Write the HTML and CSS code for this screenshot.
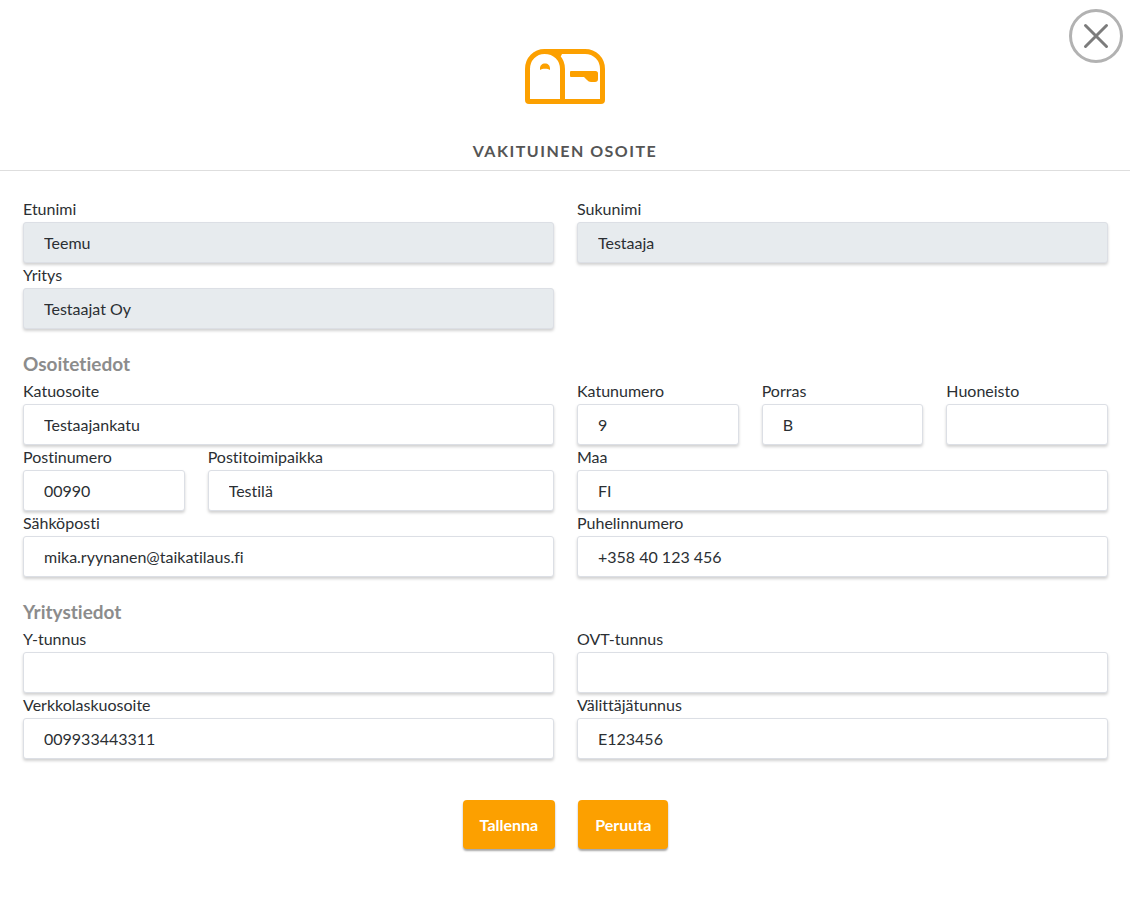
FILE: index.html
```html
<!DOCTYPE html>
<html lang="fi">
<head>
<meta charset="utf-8">
<meta name="viewport" content="width=device-width, initial-scale=1">
<title>Vakituinen osoite</title>
<link rel="stylesheet" href="styles.css">
</head>
<body>
<header class="dialog-header">
  <svg class="mailbox" viewBox="0 0 80 56" fill="none" stroke="#fca000" stroke-width="5" stroke-linejoin="round" aria-hidden="true">
    <path d="M2.500 51V20C2.500 10 10 2.500 19.500 2.500H60C70 2.500 77.500 10 77.500 20V51Q77.500 52.500 76 52.500H4Q2.500 52.500 2.500 51Z"/>
    <path d="M19.500 2.500C30 2.500 37.500 10 37.500 20V52.500"/>
    <path d="M19.500 2.500H28L36 7" stroke-width="4"/>
    <path d="M15 21V19.500C15 16.500 17 14.500 20 14.500C23 14.500 25 16.500 25 19.500V21C23 19.300 17 19.300 15 21Z" fill="#fca000" stroke="none"/>
    <path d="M46 22H70.500Q73 22 73 24.500V30Q73 33 70 33H66Q63.500 33 62 31L59 28H46Q45 28 45 27V23Q45 22 46 22Z" fill="#fca000" stroke="none"/>
  </svg>
  <h1 class="dialog-title">VAKITUINEN OSOITE</h1>
  <button class="close" type="button" aria-label="Sulje">
    <svg class="close-icon" viewBox="0 0 54 54" fill="none" aria-hidden="true">
      <circle cx="27" cy="27" r="25.500" stroke="#b2b2b2" stroke-width="3"/>
      <path d="M16.500 16.500L37.500 37.500M37.500 16.500L16.500 37.500" stroke="#7c7c7c" stroke-width="3" stroke-linecap="round"/>
    </svg>
  </button>
</header>
<form class="address-form">
  <section class="fields">
    <div class="field half"><label for="etunimi">Etunimi</label><input id="etunimi" type="text" value="Teemu" readonly></div>
    <div class="field half"><label for="sukunimi">Sukunimi</label><input id="sukunimi" type="text" value="Testaaja" readonly></div>
    <div class="field half"><label for="yritys">Yritys</label><input id="yritys" type="text" value="Testaajat Oy" readonly></div>
  </section>
  <h2 class="section-title">Osoitetiedot</h2>
  <section class="fields">
    <div class="field half"><label for="katuosoite">Katuosoite</label><input id="katuosoite" type="text" value="Testaajankatu"></div>
    <div class="field"><label for="katunumero">Katunumero</label><input id="katunumero" type="text" value="9"></div>
    <div class="field"><label for="porras">Porras</label><input id="porras" type="text" value="B"></div>
    <div class="field"><label for="huoneisto">Huoneisto</label><input id="huoneisto" type="text"></div>
    <div class="field"><label for="postinumero">Postinumero</label><input id="postinumero" type="text" value="00990"></div>
    <div class="field third"><label for="postitoimipaikka">Postitoimipaikka</label><input id="postitoimipaikka" type="text" value="Testilä"></div>
    <div class="field half"><label for="maa">Maa</label><input id="maa" type="text" value="FI"></div>
    <div class="field half"><label for="sahkoposti">Sähköposti</label><input id="sahkoposti" type="email" value="mika.ryynanen@taikatilaus.fi"></div>
    <div class="field half"><label for="puhelin">Puhelinnumero</label><input id="puhelin" type="tel" value="+358 40 123 456"></div>
  </section>
  <h2 class="section-title">Yritystiedot</h2>
  <section class="fields">
    <div class="field half"><label for="ytunnus">Y-tunnus</label><input id="ytunnus" type="text"></div>
    <div class="field half"><label for="ovt">OVT-tunnus</label><input id="ovt" type="text"></div>
    <div class="field half"><label for="verkkolasku">Verkkolaskuosoite</label><input id="verkkolasku" type="text" value="009933443311"></div>
    <div class="field half"><label for="valittaja">Välittäjätunnus</label><input id="valittaja" type="text" value="E123456"></div>
  </section>
  <div class="actions">
    <button class="btn" type="submit">Tallenna</button>
    <button class="btn" type="button">Peruuta</button>
  </div>
</form>
</body>
</html>
```

FILE: styles.css
```css
* {
  box-sizing: border-box;
}

body {
  margin: 0;
  background: #fff;
  color: #2b2f33;
  font-family: Lato, sans-serif;
  font-size: 16px;
  font-variant-ligatures: none;
}

.dialog-header {
  position: relative;
  display: flex;
  flex-direction: column;
  align-items: center;
  padding: 49px 0 7px;
  border-bottom: 1px solid #dedede;
}

.mailbox {
  width: 80px;
  height: 56px;
}

.dialog-title {
  margin: 34px 0 0;
  color: #555;
  font-size: 16px;
  font-weight: 700;
  line-height: 24px;
  letter-spacing: 1.5px;
}

.close {
  position: absolute;
  top: 9px;
  right: 7px;
  padding: 0;
  border: 0;
  background: none;
  cursor: pointer;
}

.close-icon {
  display: block;
  width: 54px;
  height: 54px;
}

.address-form {
  padding: 26px 22px 48px 23px;
}

.fields {
  display: grid;
  grid-template-columns: repeat(6, minmax(0, 1fr));
  column-gap: 23px;
}

.field {
  display: flex;
  flex-direction: column;
  gap: 2px;
}

.third {
  grid-column: span 2;
}

.half {
  grid-column: span 3;
}

.field label {
  line-height: 23px;
}

.field input {
  width: 100%;
  height: 41px;
  padding: 0 20px;
  border: 1px solid #dcdfe5;
  border-radius: 3px;
  background: #fff;
  box-shadow: 0 2px 3px rgba(0, 0, 0, 0.18);
  color: #2b2f33;
  font: inherit;
  font-variant-ligatures: none;
}

.field input:read-only {
  background: #e7ebee;
}

.section-title {
  margin: 22px 0 2px;
  color: #8c8c8c;
  font-size: 19px;
  font-weight: 700;
  line-height: 26px;
}

.actions {
  display: flex;
  justify-content: center;
  gap: 23px;
  margin-top: 41px;
}

.btn {
  height: 49px;
  padding: 0 17px;
  border: 0;
  border-radius: 4px;
  background: #fca000;
  box-shadow: 0 2px 2px rgba(0, 0, 0, 0.35);
  color: #fff;
  font: 700 16px Lato, sans-serif;
  cursor: pointer;
}
```
